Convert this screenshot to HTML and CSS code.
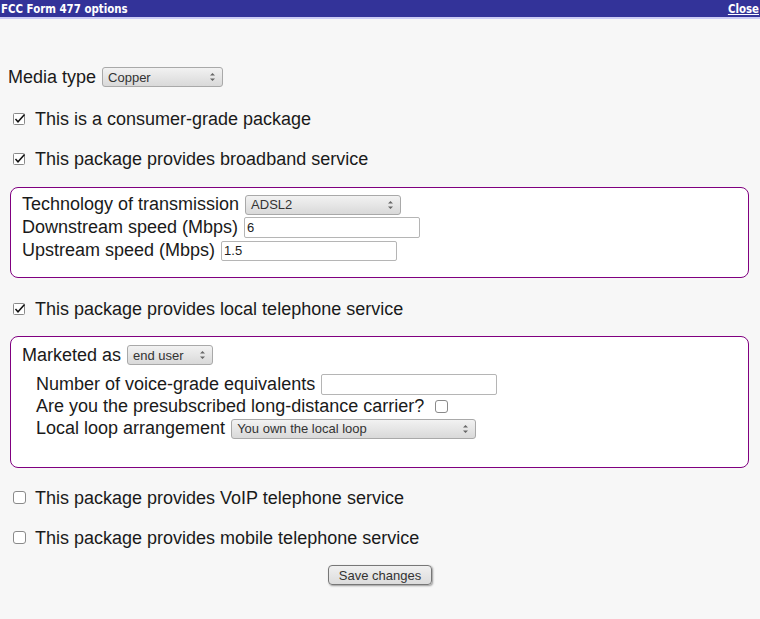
FILE: index.html
```html
<!DOCTYPE html>
<html>
<head>
<meta charset="utf-8">
<link rel="stylesheet" href="styles.css">
</head>
<body>
<div class="titlebar">
  <span class="title">FCC Form 477 options</span>
  <a class="close" href="#">Close</a>
</div>
<div class="form">
  <div class="row row-media">
    <span>Media type</span>
    <span class="select w-media"><span class="sel-text">Copper</span><svg class="arrows" width="7" height="12" viewBox="0 0 7 12"><path d="M1 4.5 L3.5 2 L6 4.5 Z M1 7.5 L3.5 10 L6 7.5 Z" fill="#666"/></svg></span>
  </div>
  <div class="row cbrow cb-first">
    <svg class="cb" width="16" height="14" viewBox="0 0 16 14"><rect x="0.5" y="1.5" width="11" height="11" rx="1" fill="#fff" stroke="#8a8a8a"/><path d="M2.5 7 L5 9.8 L11.5 2.5" fill="none" stroke="#111" stroke-width="1.5"/></svg>
    <span>This is a consumer-grade package</span>
  </div>
  <div class="row cbrow cb-next">
    <svg class="cb" width="16" height="14" viewBox="0 0 16 14"><rect x="0.5" y="1.5" width="11" height="11" rx="1" fill="#fff" stroke="#8a8a8a"/><path d="M2.5 7 L5 9.8 L11.5 2.5" fill="none" stroke="#111" stroke-width="1.5"/></svg>
    <span>This package provides broadband service</span>
  </div>
  <div class="box box-broadband">
    <div class="frow">
      <span>Technology of transmission</span>
      <span class="select w-tech"><span class="sel-text">ADSL2</span><svg class="arrows" width="7" height="12" viewBox="0 0 7 12"><path d="M1 4.5 L3.5 2 L6 4.5 Z M1 7.5 L3.5 10 L6 7.5 Z" fill="#666"/></svg></span>
    </div>
    <div class="frow">
      <span>Downstream speed (Mbps)</span>
      <span class="text-input tall">6</span>
    </div>
    <div class="frow">
      <span>Upstream speed (Mbps)</span>
      <span class="text-input">1.5</span>
    </div>
  </div>
  <div class="row cbrow cb-local">
    <svg class="cb" width="16" height="14" viewBox="0 0 16 14"><rect x="0.5" y="1.5" width="11" height="11" rx="1" fill="#fff" stroke="#8a8a8a"/><path d="M2.5 7 L5 9.8 L11.5 2.5" fill="none" stroke="#111" stroke-width="1.5"/></svg>
    <span>This package provides local telephone service</span>
  </div>
  <div class="box box-local">
    <div class="frow market">
      <span>Marketed as</span>
      <span class="select w-market"><span class="sel-text">end user</span><svg class="arrows" width="7" height="12" viewBox="0 0 7 12"><path d="M1 4.5 L3.5 2 L6 4.5 Z M1 7.5 L3.5 10 L6 7.5 Z" fill="#666"/></svg></span>
    </div>
    <div class="sub">
      <div class="frow voice">
        <span>Number of voice-grade equivalents</span>
        <span class="text-input tall"></span>
      </div>
      <div class="frow carrier">
        <span>Are you the presubscribed long-distance carrier?</span>
        <svg class="cb-small" width="13" height="13" viewBox="0 0 13 13"><rect x="0.5" y="0.5" width="12" height="12" rx="2.5" fill="#fff" stroke="#8a8a8a"/></svg>
      </div>
      <div class="frow loop">
        <span>Local loop arrangement</span>
        <span class="select w-loop"><span class="sel-text">You own the local loop</span><svg class="arrows" width="7" height="12" viewBox="0 0 7 12"><path d="M1 4.5 L3.5 2 L6 4.5 Z M1 7.5 L3.5 10 L6 7.5 Z" fill="#666"/></svg></span>
      </div>
    </div>
  </div>
  <div class="row cbrow cb-voip">
    <svg class="cb" width="16" height="14" viewBox="0 0 16 14"><rect x="0.5" y="0.5" width="12" height="12" rx="2.5" fill="#fff" stroke="#8a8a8a"/></svg>
    <span>This package provides VoIP telephone service</span>
  </div>
  <div class="row cbrow cb-next">
    <svg class="cb" width="16" height="14" viewBox="0 0 16 14"><rect x="0.5" y="0.5" width="12" height="12" rx="2.5" fill="#fff" stroke="#8a8a8a"/></svg>
    <span>This package provides mobile telephone service</span>
  </div>
  <div class="actions">
    <span class="button">Save changes</span>
  </div>
</div>
</body>
</html>
```

FILE: styles.css
```css
html, body {
  margin: 0;
  padding: 0;
  background: #f7f7f7;
}
body {
  font-family: "Liberation Sans", Arial, sans-serif;
  font-size: 18px;
  color: #1a1a1a;
  height: 619px;
  overflow: hidden;
}
.titlebar {
  display: flex;
  justify-content: space-between;
  align-items: center;
  height: 17px;
  background: #333399;
  border-bottom: 2px solid #ccccf5;
  font-family: "DejaVu Sans", sans-serif;
  font-stretch: condensed;
  font-weight: bold;
  font-size: 11.4px;
  color: #fff;
  padding: 0 1px;
}
.close {
  color: #fff;
  text-decoration: underline;
}
.form {
  display: flex;
  flex-direction: column;
  padding: 0 8px;
}
.row {
  display: flex;
  align-items: center;
  height: 20px;
  white-space: nowrap;
}
.row-media {
  margin-top: 48px;
  gap: 6px;
}
.cbrow {
  gap: 6px;
}
.cb {
  margin-left: 5px;
  flex: none;
}
.cb-first { margin-top: 22px; }
.cb-next { margin-top: 20px; }
.cb-local { margin-top: 21px; }
.cb-voip { margin-top: 20px; }

.select {
  display: inline-flex;
  align-items: center;
  justify-content: space-between;
  box-sizing: border-box;
  height: 20px;
  border: 1px solid #a9a9a9;
  border-radius: 3px;
  background: linear-gradient(#f2f2f2, #d9d9d9);
  font-size: 13px;
  color: #333;
  padding: 0 6px 0 5px;
}
.arrows { flex: none; }
.w-media { width: 121px; }
.w-tech { width: 156px; }
.w-market { width: 86px; }
.w-loop { width: 245px; }

.text-input {
  display: inline-flex;
  align-items: center;
  box-sizing: border-box;
  width: 176px;
  height: 20px;
  border: 1px solid #b5b5b5;
  border-radius: 2px;
  background: #fff;
  font-size: 13px;
  color: #222;
  padding: 0 2px;
}
.text-input.tall { height: 21px; }

.box {
  margin: 0 3px 0 2px;
  border: 1px solid #800080;
  border-radius: 8px;
  background: #fff;
  padding: 0 10px 0 11px;
}
.box-broadband {
  margin-top: 18px;
  padding-top: 5px;
  height: 84px;
}
.frow {
  display: flex;
  align-items: center;
  gap: 6px;
  height: 23px;
  white-space: nowrap;
}
.box-local {
  margin-top: 17px;
  padding-top: 7px;
  height: 123px;
}
.frow.market { height: 22px; }
.sub {
  padding-left: 14px;
}
.frow.voice { margin-top: 7px; height: 22px; }
.frow.carrier { height: 23px; }
.cb-small { margin-left: 5px; }
.frow.loop { height: 21px; }

.actions {
  display: flex;
  justify-content: center;
  margin-top: 17px;
}
.button {
  display: inline-flex;
  align-items: center;
  justify-content: center;
  box-sizing: border-box;
  width: 104px;
  height: 20px;
  border: 1px solid #777;
  border-radius: 4px;
  background: linear-gradient(#f0f0f0, #dcdcdc);
  box-shadow: 1px 1px 2px #999;
  font-size: 13px;
  color: #333;
}
```
